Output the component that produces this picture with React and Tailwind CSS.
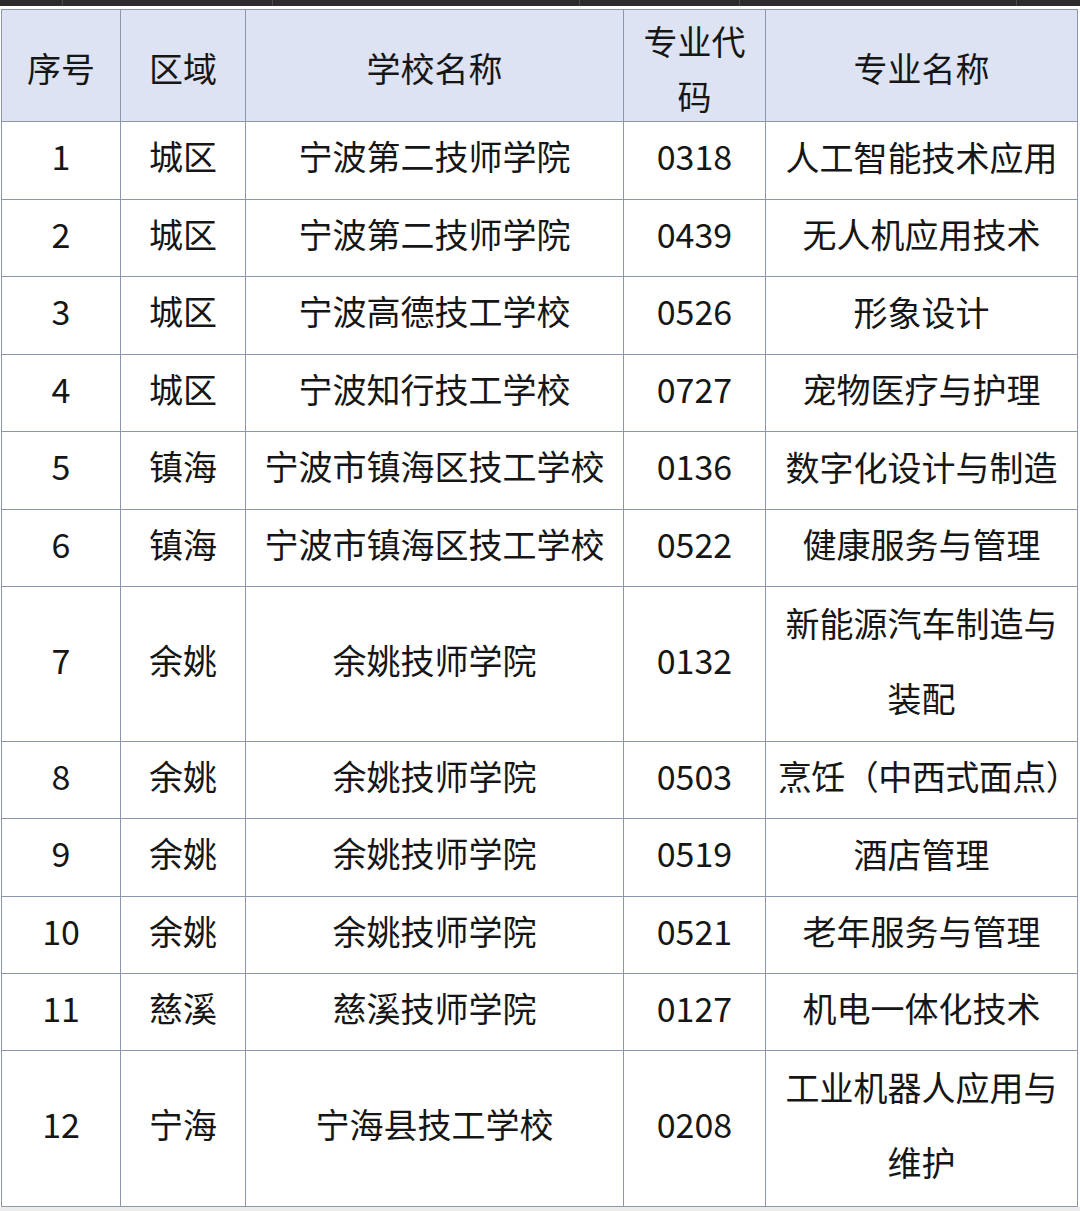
const rows = [
  ['1', '城区', '宁波第二技师学院', '0318', ['人工智能技术应用']],
  ['2', '城区', '宁波第二技师学院', '0439', ['无人机应用技术']],
  ['3', '城区', '宁波高德技工学校', '0526', ['形象设计']],
  ['4', '城区', '宁波知行技工学校', '0727', ['宠物医疗与护理']],
  ['5', '镇海', '宁波市镇海区技工学校', '0136', ['数字化设计与制造']],
  ['6', '镇海', '宁波市镇海区技工学校', '0522', ['健康服务与管理']],
  ['7', '余姚', '余姚技师学院', '0132', ['新能源汽车制造与', '装配']],
  ['8', '余姚', '余姚技师学院', '0503', ['烹饪（中西式面点）']],
  ['9', '余姚', '余姚技师学院', '0519', ['酒店管理']],
  ['10', '余姚', '余姚技师学院', '0521', ['老年服务与管理']],
  ['11', '慈溪', '慈溪技师学院', '0127', ['机电一体化技术']],
  ['12', '宁海', '宁海县技工学校', '0208', ['工业机器人应用与', '维护']],
];

function Cell({ children, head }) {
  return (
    <div className={`flex flex-col items-center justify-center whitespace-nowrap overflow-visible min-h-0 ${head ? 'bg-[#dde3f3] pt-[4px]' : 'bg-white pb-[9px]'}`}>
      {children}
    </div>
  );
}

export default function App() {
  return (
    <div className="w-[1080px] h-[1211px] bg-[#ececec] overflow-hidden text-[#161616]" style={{ fontFamily: '"Noto Sans CJK SC", "Noto Sans", sans-serif' }}>
      <div className="h-[6px] bg-[#2c2c2c] flex">
        <div className="w-[63px] border-r border-[#4a4a4a]" />
        <div className="w-[210px] border-r border-[#4a4a4a]" />
        <div className="w-[307px] border-r border-[#4a4a4a]" />
        <div className="w-[160px] border-r border-[#4a4a4a]" />
        <div className="w-[277px] border-r border-[#4a4a4a]" />
      </div>
      <div className="h-[3px] bg-white" />
      <div className="bg-white">
        <div className="ml-[1px] w-[1077px] grid grid-cols-[118px_124px_377px_141px_311px] grid-rows-[111px_77px_76px_77px_76px_77px_76px_154px_76px_77px_76px_76px_155px] gap-[1px] p-[1px] bg-[#8d97ac] text-[34px] leading-none">
          <Cell head>序号</Cell>
          <Cell head>区域</Cell>
          <Cell head>学校名称</Cell>
          <Cell head>
            <span className="leading-[55px]">专业代</span>
            <span className="leading-[55px]">码</span>
          </Cell>
          <Cell head>专业名称</Cell>
          {rows.map(([n, area, school, code, major]) => (
            <div key={n} className="contents">
              <Cell>{n}</Cell>
              <Cell>{area}</Cell>
              <Cell>{school}</Cell>
              <Cell>{code}</Cell>
              <Cell>
                {major.map((m) => (
                  <span key={m} className={`leading-[75px] ${m.length > 8 ? 'pl-[14px] tracking-[-0.5px]' : ''}`}>{m}</span>
                ))}
              </Cell>
            </div>
          ))}
        </div>
      </div>
    </div>
  );
}
